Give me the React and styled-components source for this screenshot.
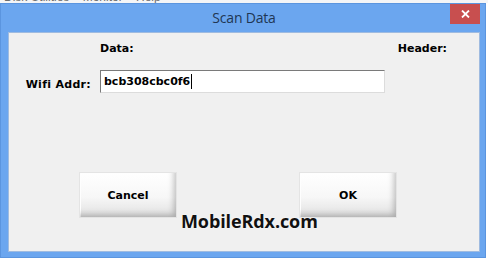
import React from "react";
import styled, { createGlobalStyle } from "styled-components";

const GlobalStyle = createGlobalStyle`
  html, body {
    margin: 0;
    padding: 0;
    background: #ffffff;
  }
`;

const Page = styled.div`
  width: 488px;
  height: 261px;
  overflow: hidden;
  background: #ffffff;
`;

// bit of the parent window's menu peeking over the dialog
const BehindStrip = styled.div`
  height: 3px;
  overflow: hidden;
  background: #f4f5f7;
  span {
    display: block;
    margin-top: -9px;
    padding-left: 4px;
    font-family: "Liberation Sans", Arial, sans-serif;
    font-size: 12px;
    line-height: 12px;
    color: #6d6d6d;
    white-space: pre;
  }
`;

const Window = styled.div`
  width: 486px;
  height: 255px;
  box-sizing: border-box;
  background: #6ba6ef;
  border: 1px solid #5b95df;
  display: flex;
  flex-direction: column;
  padding: 0 5px 5px 7px;
`;

const TitleBar = styled.div`
  height: 28px;
  display: grid;
  grid-template-columns: 1fr auto 1fr;
  align-items: start;
`;

const Title = styled.div`
  grid-column: 2;
  padding-top: 5px;
  font-family: "Open Sans", "Noto Sans", sans-serif;
  font-size: 14px;
  line-height: 18px;
  color: #1f3653;
  letter-spacing: -0.2px;
`;

const CloseButton = styled.div`
  grid-column: 3;
  justify-self: end;
  width: 30px;
  height: 20px;
  background: #c84f4f;
  display: flex;
  align-items: center;
  justify-content: center;
`;

const Content = styled.div`
  flex: 1;
  position: relative;
  background: #f0f0f0;
  border: 1px solid #9fbbe0;
  font-family: "DejaVu Sans", Verdana, sans-serif;
  font-weight: bold;
  font-size: 11px;
  color: #000;
`;

const HeadRow = styled.div`
  display: flex;
  justify-content: space-between;
  padding: 9px 32px 0 91px;
  line-height: 13px;
`;

const FieldRow = styled.div`
  display: grid;
  grid-template-columns: 91px 285px;
  align-items: center;
  margin-top: 15px;
`;

const FieldLabel = styled.label`
  justify-self: end;
  padding-right: 9px;
  padding-top: 6px;
  letter-spacing: 0.3px;
`;

const TextBox = styled.div`
  height: 23px;
  box-sizing: border-box;
  background: #ffffff;
  border-top: 1px solid #7a7a7a;
  border-left: 1px solid #7a7a7a;
  border-right: 1px solid #dcdcdc;
  border-bottom: 1px solid #dcdcdc;
  padding: 0 3px;
  display: flex;
  align-items: center;
`;

const Caret = styled.span`
  display: inline-block;
  width: 1px;
  height: 15px;
  margin-left: 1px;
  background: #000;
`;

const ButtonRow = styled.div`
  display: flex;
  gap: 124px;
  padding-left: 71px;
  margin-top: 80px;
`;

const Button = styled.button`
  width: 96px;
  height: 44px;
  border: none;
  padding: 0;
  font-family: "DejaVu Sans", Verdana, sans-serif;
  font-weight: bold;
  font-size: 11px;
  color: #000;
  background: linear-gradient(to bottom, #ffffff 0%, #f7f7f7 55%, #e0e0e0 100%);
  box-shadow: inset -4px -4px 6px -2px rgba(0, 0, 0, 0.25),
    inset 1px 1px 0 #ffffff, 0 0 0 1px #e4e4e4;
`;

const Watermark = styled.div`
  position: absolute;
  left: 172px;
  top: 177px;
  font-family: "Open Sans", "Noto Sans", sans-serif;
  font-weight: bold;
  font-size: 18px;
  line-height: 22px;
  letter-spacing: -0.1px;
  color: #111;
  text-shadow: 0 0 2px #fff;
`;

export default function App() {
  return (
    <Page>
      <GlobalStyle />
      <BehindStrip>
        <span>{"Disk Utilities    Monitor    Help"}</span>
      </BehindStrip>
      <Window>
        <TitleBar>
          <Title>Scan Data</Title>
          <CloseButton>
            <svg width="9" height="8" viewBox="0 0 9 8">
              <path d="M1 0.5 L8 7.5 M8 0.5 L1 7.5" stroke="#fff" strokeWidth="1.8" />
            </svg>
          </CloseButton>
        </TitleBar>
        <Content>
          <HeadRow>
            <span>Data:</span>
            <span>Header:</span>
          </HeadRow>
          <FieldRow>
            <FieldLabel>Wifi Addr:</FieldLabel>
            <TextBox>
              bcb308cbc0f6
              <Caret />
            </TextBox>
          </FieldRow>
          <ButtonRow>
            <Button>Cancel</Button>
            <Button>OK</Button>
          </ButtonRow>
          <Watermark>MobileRdx.com</Watermark>
        </Content>
      </Window>
    </Page>
  );
}
